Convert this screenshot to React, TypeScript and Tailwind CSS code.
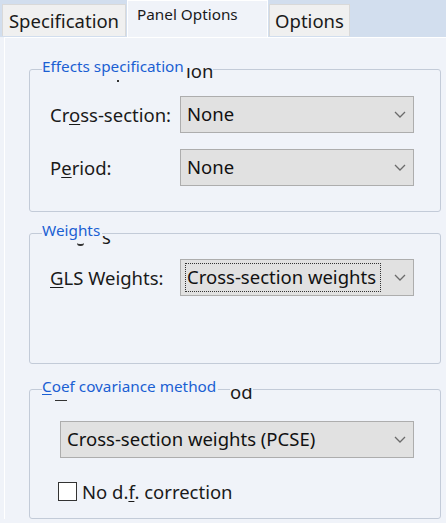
import React from "react";

const font = { fontFamily: '"Noto Sans", "Open Sans", sans-serif' };

function Chevron() {
  return (
    <svg width="12" height="7" viewBox="0 0 12 7" className="shrink-0">
      <path d="M1 1 L6 6 L11 1" fill="none" stroke="#6b6b6b" strokeWidth="1.3" />
    </svg>
  );
}

function Combo({ value, focus, className }: { value: string; focus?: boolean; className: string }) {
  return (
    <div className={`flex h-[37px] items-center justify-between border border-[#adadad] bg-[#e1e1e1] pl-[4px] pr-[7px] ${className}`}>
      <span
        className={`flex h-[29px] items-center text-[18.5px] leading-none text-[#111] ${focus ? "border border-dotted border-[#333] pl-[1px] pr-[4px]" : "pl-[2px]"}`}
      >
        {value}
      </span>
      <Chevron />
    </div>
  );
}

// leftover pieces of the caption that the dialog drew before, showing past the real caption
function Leftover({ text, left, top, height, shift }: { text: string; left: number; top: number; height: number; shift: number }) {
  return (
    <span className="absolute overflow-hidden bg-[#f0f3f9] text-[#1a1a1a]" style={{ left, top, height }}>
      <span className="block whitespace-nowrap text-[18.5px] leading-[20px]" style={{ marginTop: shift }}>
        {text}
      </span>
    </span>
  );
}

function Group({
  title,
  className,
  children,
}: {
  title: React.ReactNode;
  className: string;
  children: React.ReactNode;
}) {
  return (
    <div className={`relative ml-[24px] w-[412px] rounded-[3px] border border-[#c3cbd8] ${className}`}>
      <span className="absolute left-[12px] top-[-14px] h-[23px] whitespace-nowrap bg-[#f0f3f9] pr-[2px] text-[15.3px] leading-[20px] text-[#1b5fd3]">
        {title}
      </span>
      {children}
    </div>
  );
}

export default function App() {
  return (
    <div className="h-[523px] w-[446px] overflow-hidden bg-[#f0f3f9]" style={font}>
      <div className="flex h-[37px] items-end bg-[#d2deee] pl-[2px]">
        <div className="mb-[1px] flex h-[32px] w-[124px] items-center justify-center border border-b-0 border-[#d9d9d9] bg-[#f0f0f0] text-[18.5px] text-[#1a1a1a]">
          Specification
        </div>
        <div className="relative z-10 ml-[1px] flex h-[37px] w-[141px] items-start border border-b-0 border-white bg-[#f0f3f9] pl-[9px] pt-[2px] text-[15.3px] text-[#1a1a1a]">
          Panel Options
        </div>
        <div className="mb-[1px] ml-[1px] flex h-[32px] w-[81px] items-center justify-center border border-b-0 border-[#d9d9d9] bg-[#f0f0f0] text-[18.5px] text-[#1a1a1a]">
          Options
        </div>
      </div>

      <div className="ml-[4px] border-t border-l border-white bg-[#f0f3f9] pt-[31px]">
        <Group title="Effects specification" className="h-[143px]">
          <Leftover text="ion" left={156} top={-3} height={12} shift={-6} />
          <span className="absolute left-[87px] top-[10px] h-[2px] w-[2px] bg-[#333]" />
          <div className="mt-[26px] flex items-center">
            <span className="w-[150px] pl-[20px] text-[18.5px] text-[#1a1a1a]">
              Cr<span className="underline underline-offset-2">o</span>ss-section:
            </span>
            <Combo value="None" className="w-[234px]" />
          </div>
          <div className="mt-[16px] flex items-center">
            <span className="w-[150px] pl-[20px] text-[18.5px] text-[#1a1a1a]">
              P<span className="underline underline-offset-2">e</span>riod:
            </span>
            <Combo value="None" className="w-[234px]" />
          </div>
        </Group>

        <Group title="Weights" className="mt-[21px] h-[131px]">
          <Leftover text="s" left={72} top={2} height={9} shift={-9} />
          <span className="absolute left-[47px] top-[9px] h-[3px] w-[7px] rounded-b-full border-b-2 border-[#333]" />
          <div className="mt-[25px] flex items-center">
            <span className="w-[150px] pl-[20px] text-[18.5px] text-[#1a1a1a]">
              <span className="underline underline-offset-2">G</span>LS Weights:
            </span>
            <Combo value="Cross-section weights" focus className="w-[234px]" />
          </div>
        </Group>

        <Group
          title={
            <>
              <span className="underline underline-offset-2">C</span>oef covariance method
            </>
          }
          className="mt-[25px] h-[130px]"
        >
          <Leftover text="od" left={200} top={-2} height={11} shift={-6} />
          <span className="absolute left-[25px] top-[10px] h-[1px] w-[12px] bg-[#333]" />
          <Combo value="Cross-section weights (PCSE)" className="ml-[30px] mt-[31px] w-[354px]" />
          <div className="ml-[28px] mt-[20px] flex items-center gap-[5px]">
            <span className="h-[19px] w-[19px] border border-[#333] bg-white" />
            <span className="text-[18.5px] text-[#1a1a1a]">
              No d.<span className="underline underline-offset-2">f</span>. correction
            </span>
          </div>
        </Group>
      </div>
    </div>
  );
}
